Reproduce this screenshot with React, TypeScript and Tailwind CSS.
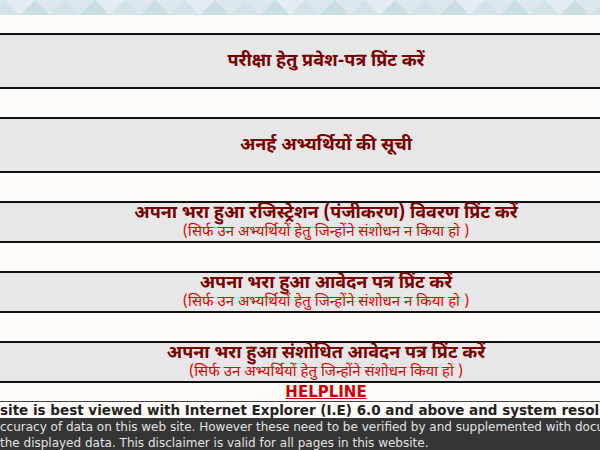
const hindi = { fontFamily: '"Noto Sans Devanagari", "Noto Sans", "Liberation Sans", sans-serif' };
const verdana = { fontFamily: '"DejaVu Sans", Verdana, sans-serif' };

type Item = { title: string; note?: string };

const items: Item[] = [
  { title: "परीक्षा हेतु प्रवेश-पत्र प्रिंट करें" },
  { title: "अनर्ह अभ्यर्थियों की सूची" },
  {
    title: "अपना भरा हुआ रजिस्ट्रेशन (पंजीकरण) विवरण प्रिंट करें",
    note: "(सिर्फ उन अभ्यर्थियों हेतु जिन्होंने संशोधन न किया हो )",
  },
  {
    title: "अपना भरा हुआ आवेदन पत्र प्रिंट करें",
    note: "(सिर्फ उन अभ्यर्थियों हेतु जिन्होंने संशोधन न किया हो )",
  },
  {
    title: "अपना भरा हुआ संशोधित आवेदन पत्र प्रिंट करें",
    note: "(सिर्फ उन अभ्यर्थियों हेतु जिन्होंने संशोधन किया हो )",
  },
];

function HeaderPattern() {
  // soft triangle strip at the top of the page
  const tris = [];
  for (let i = 0; i < 24; i++) {
    const x = i * 30 - 10;
    tris.push(
      <polygon key={"u" + i} points={`${x},15 ${x + 15},0 ${x + 30},15`} fill={i % 2 ? "#c9dde4" : "#d2e3e9"} />
    );
    tris.push(
      <polygon key={"d" + i} points={`${x + 15},0 ${x + 30},15 ${x + 45},0`} fill={i % 3 ? "#dde8ee" : "#e2ecf1"} />
    );
  }
  return (
    <svg width="652" height="15" className="block">
      <rect width="652" height="15" fill="#d8e6ec" />
      {tris}
    </svg>
  );
}

export default function App() {
  return (
    <div className="w-full h-[450px] overflow-hidden bg-[#fffbf8]">
      <div className="w-[652px]">
        <HeaderPattern />
        <div className="h-[18px]" />
        <div className="flex flex-col gap-[28px]">
          {items.map((it) => (
            <a
              key={it.title}
              href="#"
              className={`flex flex-col items-center justify-center bg-[#e7e7e7] border-y-2 border-[#111] ${
                it.note ? "h-[42px]" : "h-[56px]"
              }`}
              style={hindi}
            >
              <span className="text-[18px] font-bold leading-[21px] text-[#7a0000] whitespace-nowrap">{it.title}</span>
              {it.note && (
                <span className="text-[15px] leading-[17px] text-[#e00000] whitespace-nowrap">{it.note}</span>
              )}
            </a>
          ))}
        </div>
        <div className="h-[18px] flex items-center justify-center">
          <a href="#" className="text-[15px] font-bold leading-[18px] text-[#d00000] underline" style={verdana}>
            HELPLINE
          </a>
        </div>
        <div className="border-t border-[#444] h-[17px] flex items-center whitespace-nowrap overflow-hidden" style={verdana}>
          <span className="text-[13.5px] font-bold text-[#222] leading-[16px]">
            site is best viewed with Internet Explorer (I.E) 6.0 and above and system resolution
          </span>
        </div>
        <div className="bg-[#353535] h-[40px] pt-[1px] text-[#e2e2e2] text-[12px] leading-[16px] whitespace-nowrap overflow-hidden" style={verdana}>
          <div>ccuracy of data on this web site. However these need to be verified by and supplemented with documents</div>
          <div>the displayed data. This disclaimer is valid for all pages in this website.</div>
        </div>
      </div>
    </div>
  );
}
